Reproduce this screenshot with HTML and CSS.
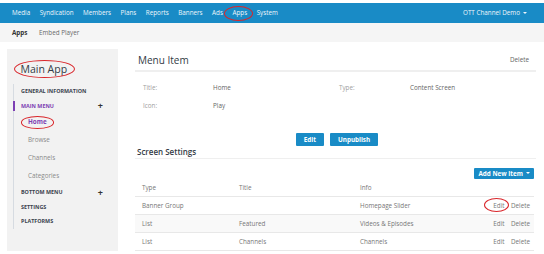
FILE: index.html
```html
<!DOCTYPE html>
<html lang="en">
<head>
    <meta charset="UTF-8">
    <meta name="viewport" content="width=device-width, initial-scale=1.0">
    <title>Apps - Main App</title>
    <link rel="stylesheet" href="styles.css">
</head>
<body>
    <header class="topnav">
        <nav class="main-links">
            <a>Media</a>
            <a>Syndication</a>
            <a>Members</a>
            <a>Plans</a>
            <a>Reports</a>
            <a>Banners</a>
            <a>Ads</a>
            <a class="circled apps-mark">Apps</a>
            <a>System</a>
        </nav>
        <div class="account">OTT Channel Demo <span class="caret"></span></div>
    </header>
    <div class="subnav">
        <a class="active">Apps</a>
        <a>Embed Player</a>
    </div>
    <div class="layout">
        <aside class="sidebar">
            <h2 class="app-name"><span class="circled name-mark">Main App</span></h2>
            <ul class="tree">
                <li class="section">GENERAL INFORMATION</li>
                <li class="section open">MAIN MENU <span class="plus">+</span></li>
                <li class="item current"><span class="circled home-mark">Home</span></li>
                <li class="item">Browse</li>
                <li class="item">Channels</li>
                <li class="item">Categories</li>
                <li class="section">BOTTOM MENU <span class="plus">+</span></li>
                <li class="section">SETTINGS</li>
                <li class="section">PLATFORMS</li>
            </ul>
        </aside>
        <main class="content">
            <div class="page-head">
                <h1>Menu Item</h1>
                <a class="link">Delete</a>
            </div>
            <div class="details">
                <span class="label">Title:</span>
                <span class="value">Home</span>
                <span class="label">Type:</span>
                <span class="value">Content Screen</span>
                <span class="label">Icon:</span>
                <span class="value">Play</span>
            </div>
            <div class="actions">
                <button class="btn">Edit</button>
                <button class="btn">Unpublish</button>
            </div>
            <h3 class="section-title">Screen Settings</h3>
            <div class="toolbar">
                <button class="btn btn-small">Add New Item <span class="caret"></span></button>
            </div>
            <table class="screens">
                <tr>
                    <th class="col-type">Type</th>
                    <th class="col-title">Title</th>
                    <th>Info</th>
                    <th></th>
                </tr>
                <tr>
                    <td>Banner Group</td>
                    <td></td>
                    <td>Homepage Slider</td>
                    <td class="row-actions"><span class="circled edit-mark">Edit</span><span>Delete</span></td>
                </tr>
                <tr>
                    <td>List</td>
                    <td>Featured</td>
                    <td>Videos &amp; Episodes</td>
                    <td class="row-actions"><span>Edit</span><span>Delete</span></td>
                </tr>
                <tr>
                    <td>List</td>
                    <td>Channels</td>
                    <td>Channels</td>
                    <td class="row-actions"><span>Edit</span><span>Delete</span></td>
                </tr>
            </table>
        </main>
    </div>
</body>
</html>
```

FILE: styles.css
```css
body {
    font-family: 'Open Sans', 'Noto Sans', sans-serif;
    margin: 0;
    padding: 3px 0 0;
    background-color: #fff;
    color: #666;
    font-size: 6.3px;
    height: 251px;
    overflow: hidden;
}
a {
    cursor: pointer;
}

/* top bar */
.topnav {
    display: flex;
    justify-content: space-between;
    align-items: center;
    height: 19.5px;
    padding: 0 17px 0 12px;
    background-color: #198bc6;
    color: #eef6fb;
}
.main-links {
    display: flex;
    gap: 9.5px;
}
.main-links a {
    line-height: 19.5px;
}
.account {
    display: flex;
    align-items: center;
    gap: 3px;
}
.caret {
    display: inline-block;
    width: 0;
    height: 0;
    border-left: 2px solid transparent;
    border-right: 2px solid transparent;
    border-top: 2px solid currentColor;
}
.subnav {
    display: flex;
    align-items: center;
    gap: 11.5px;
    height: 19.5px;
    padding-left: 12px;
    background-color: #f5f5f5;
    color: #6a6a6a;
}
.subnav .active {
    font-weight: 700;
    color: #333;
}

/* red annotation rings */
.circled {
    position: relative;
    display: inline-block;
}
.circled::after {
    content: '';
    position: absolute;
    border: 1px solid #d9262b;
    border-radius: 50%;
}
.apps-mark::after {
    top: 3px;
    bottom: 1.5px;
    left: -8px;
    right: -6px;
}
.name-mark::after {
    top: -2px;
    bottom: -2px;
    left: -7px;
    right: -8px;
}
.home-mark::after {
    top: 3px;
    bottom: 2.5px;
    left: -7.5px;
    right: -7px;
}
.edit-mark::after {
    top: -3px;
    bottom: -2px;
    left: -9px;
    right: -5px;
}

/* page */
.layout {
    display: flex;
    gap: 17px;
    padding: 7px 8px 0 7px;
}
.sidebar {
    width: 111px;
    flex: none;
    height: 202px;
    background-color: #f2f2f2;
}
.app-name {
    margin: 13px 0 8px 13.5px;
    font-size: 10.5px;
    font-weight: 400;
    line-height: 14px;
    color: #333b45;
}
.tree {
    list-style: none;
    margin: 0 0 0 6px;
    padding: 0 0 0 7px;
    border-left: 1px solid #d6dbe1;
}
.tree li {
    position: relative;
}
.section {
    display: flex;
    justify-content: space-between;
    align-items: center;
    height: 14.5px;
    padding-right: 15px;
    font-size: 5.4px;
    font-weight: 700;
    color: #3a424e;
}
.section.open {
    color: #7d3fb3;
}
.section.open::before {
    content: '';
    position: absolute;
    left: -8.5px;
    top: 2.5px;
    bottom: 2.5px;
    width: 2px;
    background-color: #7d3fb3;
}
.plus {
    font-size: 9px;
    font-weight: 700;
    color: #333;
}
.item {
    height: 18px;
    line-height: 18px;
    padding-left: 7px;
    color: #8a8a8a;
}
.item.current {
    font-weight: 700;
    color: #7d3fb3;
}

.content {
    width: 401px;
    flex: none;
}
.page-head {
    display: flex;
    justify-content: space-between;
    align-items: center;
    height: 21px;
    padding: 0 7px 0 3px;
    border-bottom: 2px solid #efefef;
}
.page-head h1 {
    margin: 0;
    font-size: 10px;
    font-weight: 400;
    color: #333b45;
}
.link {
    color: #666;
}
.details {
    display: grid;
    grid-template-columns: 70px 126px 71px 1fr;
    padding: 6.5px 8px 0;
    line-height: 18.5px;
}
.label {
    color: #a0a0a0;
}
.value {
    color: #666;
}
.actions {
    display: flex;
    justify-content: center;
    gap: 6px;
    margin-top: 17.5px;
    padding-left: 3px;
}
.btn {
    height: 13px;
    padding: 0 8px;
    border: none;
    border-radius: 1px;
    background-color: #198bc6;
    color: #fff;
    font-family: inherit;
    font-size: 6.3px;
    font-weight: 700;
}
.btn-small {
    display: flex;
    align-items: center;
    gap: 3px;
    height: 10.5px;
    padding: 0 4px;
}
.section-title {
    margin: 0;
    padding: 0 0 1px 2px;
    font-size: 8px;
    font-weight: 600;
    line-height: 11px;
    color: #333b45;
    border-bottom: 1px solid #efefef;
}
.toolbar {
    display: flex;
    justify-content: flex-end;
    margin-top: 9px;
    padding-right: 2px;
}
.screens {
    width: 399px;
    border-collapse: collapse;
}
.screens th,
.screens td {
    padding: 0 7px;
    text-align: left;
    font-weight: 400;
    color: #777;
}
.screens th {
    height: 17.5px;
    border-bottom: 1px solid #e8e8e8;
}
.screens td {
    height: 17px;
    border-bottom: 1px solid #e8e8e8;
}
.screens tr:nth-child(3) {
    background-color: #f9f9f9;
}
.col-type {
    width: 83px;
}
.col-title {
    width: 107px;
}
.row-actions {
    text-align: right !important;
    padding-right: 4px !important;
}
.row-actions span {
    margin-left: 6.5px;
}
```
